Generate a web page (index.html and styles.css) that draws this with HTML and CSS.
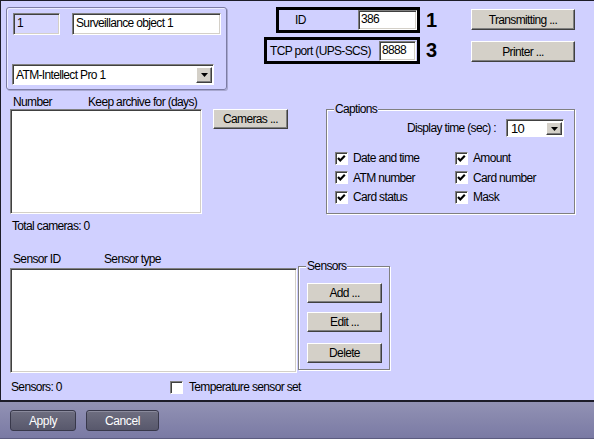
FILE: index.html
```html
<!DOCTYPE html>
<html>
<head>
<meta charset="utf-8">
<link rel="stylesheet" href="styles.css">
</head>
<body>
<div class="dialog">
  <div class="main">
    <div class="row-top">
      <div class="objbox">
        <div class="obj-row">
          <div class="field field-num">1</div>
          <div class="field field-name">Surveillance object 1</div>
        </div>
        <div class="combo combo-type">
          <span class="combo-text">ATM-Intellect Pro 1</span>
          <span class="combo-btn"><svg width="7" height="4" viewBox="0 0 7 4"><path d="M0 0H7L3.5 4Z" fill="#000"/></svg></span>
        </div>
      </div>
      <div class="idcol">
        <div class="hl hl-id"><span class="hl-label">ID</span><div class="field field-id">386</div></div>
        <div class="hl hl-tcp"><span class="hl-label">TCP port (UPS-SCS)</span><div class="field field-port">8888</div></div>
      </div>
      <div class="nums">
        <div class="num num1">1</div>
        <div class="num num3">3</div>
      </div>
      <div class="btncol">
        <button class="btn btn-wide">Transmitting ...</button>
        <button class="btn btn-wide btn-printer">Printer ...</button>
      </div>
    </div>

    <div class="row-mid">
      <div class="cam-col">
        <div class="list-head"><span class="h-number">Number</span><span class="h-keep">Keep archive for (days)</span></div>
        <div class="listbox list-cams"></div>
      </div>
      <button class="btn btn-cams">Cameras ...</button>
      <div class="group captions">
        <span class="group-label">Captions</span>
        <div class="disp-row">
          <span class="disp-label">Display time (sec) :</span>
          <div class="combo combo-time">
            <span class="combo-text">10</span>
            <span class="combo-btn"><svg width="7" height="4" viewBox="0 0 7 4"><path d="M0 0H7L3.5 4Z" fill="#000"/></svg></span>
          </div>
        </div>
        <div class="checks">
          <label class="chk-item"><span class="chk"><svg width="11" height="11" viewBox="0 0 11 11"><polyline points="2,5 4.3,7.5 8.8,2.8" fill="none" stroke="#000" stroke-width="2.2"/></svg></span>Date and time</label>
          <label class="chk-item"><span class="chk"><svg width="11" height="11" viewBox="0 0 11 11"><polyline points="2,5 4.3,7.5 8.8,2.8" fill="none" stroke="#000" stroke-width="2.2"/></svg></span>Amount</label>
          <label class="chk-item"><span class="chk"><svg width="11" height="11" viewBox="0 0 11 11"><polyline points="2,5 4.3,7.5 8.8,2.8" fill="none" stroke="#000" stroke-width="2.2"/></svg></span>ATM number</label>
          <label class="chk-item"><span class="chk"><svg width="11" height="11" viewBox="0 0 11 11"><polyline points="2,5 4.3,7.5 8.8,2.8" fill="none" stroke="#000" stroke-width="2.2"/></svg></span>Card number</label>
          <label class="chk-item"><span class="chk"><svg width="11" height="11" viewBox="0 0 11 11"><polyline points="2,5 4.3,7.5 8.8,2.8" fill="none" stroke="#000" stroke-width="2.2"/></svg></span>Card status</label>
          <label class="chk-item"><span class="chk"><svg width="11" height="11" viewBox="0 0 11 11"><polyline points="2,5 4.3,7.5 8.8,2.8" fill="none" stroke="#000" stroke-width="2.2"/></svg></span>Mask</label>
        </div>
      </div>
    </div>

    <div class="total">Total cameras: 0</div>

    <div class="row-sensors">
      <div class="sens-col">
        <div class="list-head"><span class="h-sid">Sensor ID</span><span class="h-stype">Sensor type</span></div>
        <div class="listbox list-sens"></div>
      </div>
      <div class="group sensors">
        <span class="group-label">Sensors</span>
        <button class="btn btn-sens">Add ...</button>
        <button class="btn btn-sens btn-edit">Edit ...</button>
        <button class="btn btn-sens btn-del">Delete</button>
      </div>
    </div>

    <div class="sens-foot">
      <span class="sens-count">Sensors: 0</span>
      <label class="chk-item temp"><span class="chk"></span>Temperature sensor set</label>
    </div>
  </div>
  <div class="footer">
    <button class="fbtn fbtn-apply">Apply</button>
    <button class="fbtn fbtn-cancel">Cancel</button>
  </div>
</div>
</body>
</html>
```

FILE: styles.css
```css
* { box-sizing: border-box; }
html, body {
  margin: 0;
  padding: 0;
  width: 594px;
  height: 439px;
  overflow: hidden;
  background: #d0d0ff;
}
body {
  font-family: "Liberation Sans", Arial, sans-serif;
  font-size: 12px;
  letter-spacing: -0.65px;
  color: #000;
}
.dialog {
  width: 594px;
  height: 439px;
  display: flex;
  flex-direction: column;
}
.main {
  height: 400px;
  border-top: 1px solid #1c1c28;
  border-left: 1px solid #1c1c28;
  background: #d0d0ff;
}

/* generic controls */
.field {
  height: 22px;
  line-height: 18px;
  padding: 0 3px;
  background: #fff;
  border: 1px solid;
  border-color: #808080 #fff #fff #808080;
  box-shadow: inset 1px 1px 0 #404040, inset -1px -1px 0 #d4d0c8;
  white-space: nowrap;
  overflow: hidden;
}
.btn {
  font-family: "Liberation Sans", Arial, sans-serif;
  font-size: 12px;
  letter-spacing: -0.65px;
  color: #000;
  background: #d4d0c8;
  border: 1px solid;
  border-color: #fff #404040 #404040 #fff;
  box-shadow: inset -1px -1px 0 #808080;
  padding: 0;
  margin: 0;
  height: 20px;
  line-height: 16px;
  display: block;
}
.combo {
  display: flex;
  align-items: center;
  background: #fff;
  border: 1px solid;
  border-color: #808080 #fff #fff #808080;
  box-shadow: inset 1px 1px 0 #404040;
  padding: 2px 1px 1px 2px;
}
.combo-text {
  flex: 1;
  padding-left: 1px;
  white-space: nowrap;
}
.combo-time .combo-text {
  font-size: 13px;
  padding-left: 2px;
}
.combo-btn {
  width: 16px;
  height: 100%;
  background: #d4d0c8;
  border: 1px solid;
  border-color: #fff #404040 #404040 #fff;
  box-shadow: inset -1px -1px 0 #808080;
  display: flex;
  align-items: center;
  justify-content: center;
}
.chk {
  width: 13px;
  height: 13px;
  background: #fff;
  border: 1px solid;
  border-color: #808080 #fff #fff #808080;
  box-shadow: inset 1px 1px 0 #404040;
  display: inline-flex;
  align-items: center;
  justify-content: center;
  flex: none;
}
.chk-item {
  display: flex;
  align-items: center;
  gap: 5px;
  white-space: nowrap;
}
.group {
  position: relative;
  border: 1px solid #808080;
  box-shadow: 1px 1px 0 #fff, inset 1px 1px 0 #fff;
}
.group-label {
  position: absolute;
  top: -8px;
  left: 7px;
  padding: 0 1px;
  line-height: 14px;
  background: #d0d0ff;
}

/* top row */
.row-top {
  display: flex;
  align-items: flex-start;
  padding-top: 6px;
  height: 94px;
}
.objbox {
  margin-left: 5px;
  width: 221px;
  height: 83px;
  border: 1px solid #7c7ca4;
  border-radius: 3px;
  box-shadow: inset 1px 1px 0 #ececff, 1px 1px 0 #a8a8d0;
  padding: 5px 0 0 5px;
}
.obj-row {
  display: flex;
  margin-left: 1px;
}
.field-num {
  width: 47px;
  background: #d6d6ff;
}
.field-name {
  width: 149px;
  margin-left: 12px;
}
.combo-type {
  margin-top: 29px;
  width: 202px;
  height: 21px;
}
.idcol {
  margin-left: 37px;
  width: 156px;
  display: flex;
  flex-direction: column;
  align-items: flex-end;
}
.hl {
  border: 3px solid #000;
  display: flex;
  align-items: center;
  white-space: nowrap;
}
.hl-id {
  width: 144px;
  height: 26px;
}
.hl-id .hl-label {
  padding-left: 16px;
}
.hl-tcp {
  margin-top: 4px;
  width: 156px;
  height: 27px;
}
.hl-tcp .hl-label {
  padding-left: 3px;
}
.field-id {
  margin-left: auto;
  width: 59px;
  height: 20px;
  line-height: 16px;
  padding-left: 2px;
}
.field-port {
  margin-left: auto;
  margin-right: 1px;
  width: 37px;
  height: 20px;
  line-height: 16px;
  padding-left: 2px;
}
.nums {
  margin-left: 6px;
  width: 40px;
  display: flex;
  flex-direction: column;
}
.num {
  font-weight: bold;
  font-size: 20px;
  letter-spacing: 0;
  line-height: 22px;
}
.num1 {
  margin-top: 2px;
}
.num3 {
  margin-top: 8px;
}
.btncol {
  margin-left: 5px;
  padding-top: 2px;
}
.btn-wide {
  width: 104px;
  height: 21px;
}
.btn-printer {
  margin-top: 11px;
}

/* mid row */
.row-mid {
  display: flex;
  align-items: flex-start;
}
.cam-col {
  margin-left: 9px;
  width: 192px;
}
.list-head {
  height: 14px;
  line-height: 14px;
  display: flex;
  white-space: nowrap;
}
.h-number { padding-left: 3px; width: 78px; }
.listbox {
  background: #fff;
  border: 1px solid;
  border-color: #808080 #fff #fff #808080;
  box-shadow: inset 1px 1px 0 #404040, inset -1px -1px 0 #d4d0c8;
}
.list-cams {
  height: 105px;
}
.btn-cams {
  margin-left: 11px;
  margin-top: 14px;
  width: 75px;
  height: 20px;
}
.captions {
  margin-left: 38px;
  margin-top: 14px;
  width: 249px;
  height: 105px;
  padding: 9px 10px 0 8px;
}
.disp-row {
  display: flex;
  justify-content: flex-end;
  align-items: center;
  gap: 10px;
}
.combo-time {
  width: 58px;
  height: 18px;
}
.checks {
  margin-top: 11px;
  display: grid;
  grid-template-columns: 120px 1fr;
  grid-template-rows: 20px 19px 20px;
}

.total {
  margin-top: 5px;
  margin-left: 11px;
  line-height: 14px;
}

/* sensors */
.row-sensors {
  margin-top: 19px;
  display: flex;
  align-items: flex-start;
}
.sens-col {
  margin-left: 9px;
  width: 287px;
}
.h-sid { padding-left: 3px; width: 94px; }
.list-sens {
  margin-top: 2px;
  height: 105px;
}
.sensors {
  margin-left: 1px;
  margin-top: 14px;
  width: 92px;
  height: 104px;
  padding: 16px 0 0 8px;
}
.btn-sens {
  width: 75px;
  height: 20px;
}
.btn-edit { margin-top: 9px; }
.btn-del { margin-top: 11px; }

.sens-foot {
  margin-top: 7px;
  display: flex;
  align-items: center;
  height: 14px;
}
.sens-count {
  margin-left: 10px;
  width: 159px;
}
.temp {
  gap: 6px;
}

/* footer */
.footer {
  height: 39px;
  border-top: 2px solid #1c1c28;
  border-bottom: 1px solid #5c5c80;
  background: linear-gradient(#9292b4, #7a7aa4);
  display: flex;
  align-items: flex-start;
  padding: 8px 0 0 10px;
  gap: 10px;
}
.fbtn {
  font-family: "Liberation Sans", Arial, sans-serif;
  font-size: 12px;
  letter-spacing: -0.4px;
  color: #fff;
  height: 21px;
  padding: 0;
  border: 1px solid #38384a;
  border-radius: 3px;
  background: linear-gradient(#6e6e80, #58586c);
  box-shadow: inset 0 1px 0 #8a8a9c;
}
.fbtn-apply { width: 66px; }
.fbtn-cancel { width: 73px; }
```
